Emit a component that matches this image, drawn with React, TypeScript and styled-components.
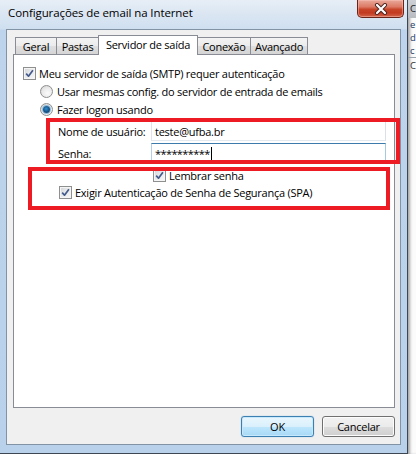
import React from 'react';
import styled, { createGlobalStyle, css } from 'styled-components';

const FONT = `"Open Sans", "Noto Sans", "DejaVu Sans", sans-serif`;

const Global = createGlobalStyle`
  *, *::before, *::after { box-sizing: border-box; }
  html, body { margin: 0; padding: 0; }
  body {
    width: 416px; height: 454px; overflow: hidden;
    font-family: ${FONT}; font-size: 11px; color: #000; background: #fff;
    letter-spacing: -0.25px;
  }
`;

const Desktop = styled.div`
  display: flex;
  width: 416px;
  height: 454px;
`;

const Window = styled.div`
  flex: none;
  width: 408px;
  height: 454px;
  display: flex;
  flex-direction: column;
  padding: 0 6px 8px 6px;
  border-right: 1px solid #3d4753;
  border-bottom: 1px solid #3d4753;
  background:
    linear-gradient(to bottom, #e7eef6 0px, #dbe6f2 14px, #cfdff0 29px, #bed4ec 30px, #b9d1eb 100%);
`;

const TitleBar = styled.div`
  height: 29px;
  flex: none;
  display: flex;
  justify-content: space-between;
  align-items: flex-start;
  margin: 0 -6px 0 -6px;
  padding: 0 3px 0 8px;
`;

const Title = styled.div`
  padding-top: 5px;
  line-height: 16px;
  font-size: 11.5px;
  letter-spacing: -0.1px;
  color: #000;
  white-space: nowrap;
`;

const CloseButton = styled.div`
  width: 47px;
  height: 18px;
  border: 1px solid #6b2418;
  border-top: none;
  border-radius: 0 0 5px 5px;
  background: linear-gradient(to bottom, #e9a99b 0%, #dc7a65 40%, #c7452a 55%, #c23b20 75%, #d2644a 100%);
  box-shadow: inset 0 0 0 1px rgba(255, 200, 190, 0.45);
  display: flex;
  align-items: center;
  justify-content: center;
`;

const Client = styled.div`
  flex: 1;
  display: flex;
  flex-direction: column;
  border: 1px solid #8393a6;
  background: #f0f0f0;
  padding: 5px 5px 0 6px;
`;

const TabRow = styled.div`
  position: relative;
  z-index: 1;
  height: 19px;
  display: flex;
  align-items: flex-start;
  padding-left: 2px;
`;

const Tab = styled.div<{ $w: number; $active?: boolean }>`
  width: ${(p) => p.$w}px;
  flex: none;
  height: 17px;
  margin-top: 2px;
  border: 1px solid #898c95;
  border-bottom: none;
  margin-right: -1px;
  display: flex;
  align-items: center;
  justify-content: center;
  padding-top: 1px;
  white-space: nowrap;
  background: linear-gradient(to bottom, #f3f3f3 0%, #ebebeb 50%, #dfdfdf 51%, #d5d5d5 100%);
  ${(p) =>
    p.$active &&
    css`
      height: 20px;
      margin-top: 0;
      padding-top: 0;
      padding-bottom: 3px;
      background: #fff;
      position: relative;
      z-index: 2;
    `}
`;

const Panel = styled.div`
  width: 382px;
  height: 354px;
  flex: none;
  border: 1px solid #898c95;
  background: #fff;
  padding: 9px 0 0 9px;
  display: flex;
  flex-direction: column;
  position: relative;
`;

const Row = styled.div<{ $indent?: number; $h?: number; $gap?: number; $top?: number }>`
  height: ${(p) => p.$h ?? 18}px;
  margin-left: ${(p) => p.$indent ?? 0}px;
  margin-top: ${(p) => p.$top ?? 0}px;
  display: flex;
  align-items: center;
  gap: ${(p) => p.$gap ?? 3}px;
  white-space: nowrap;
`;

const FieldRow = styled.div<{ $top?: number }>`
  height: 20px;
  margin-top: ${(p) => p.$top ?? 0}px;
  margin-left: 35px;
  display: flex;
  align-items: center;
`;

const FieldLabel = styled.span`
  width: 93px;
  flex: none;
`;

const TextBox = styled.div<{ $focus?: boolean }>`
  width: 235px;
  height: 20px;
  border: 1px solid;
  border-color: #abadb3 #dbdfe6 #e3e9ef #e2e3ea;
  background: #fff;
  padding: 0 3px;
  display: flex;
  align-items: center;
  ${(p) =>
    p.$focus &&
    css`
      border-color: #3d7bad #a4c9e3 #b7d9ed #b5cfe7;
    `}
`;

const Caret = styled.span`
  width: 1px;
  height: 13px;
  background: #000;
  margin-left: 1px;
`;

const Stars = styled.span`
  letter-spacing: -0.6px;
`;

const Check = styled.span`
  width: 13px;
  height: 13px;
  flex: none;
  border: 1px solid #8e8f8f;
  background: linear-gradient(135deg, #d0d3d7 0%, #e8e9ea 45%, #f7f7f7 100%);
  box-shadow: inset 0 0 0 1px #f5f5f5;
  display: flex;
  align-items: center;
  justify-content: center;
`;

const Radio = styled.span<{ $on?: boolean }>`
  width: 13px;
  height: 13px;
  flex: none;
  border-radius: 50%;
  border: 1px solid #8e8f8f;
  background: radial-gradient(circle at 60% 65%, #fbfbfb 0%, #e9e9e9 55%, #c9c9c9 100%);
  display: flex;
  align-items: center;
  justify-content: center;
  &::after {
    content: '';
    display: ${(p) => (p.$on ? 'block' : 'none')};
    width: 7px;
    height: 7px;
    border-radius: 50%;
    background: radial-gradient(circle at 45% 40%, #2f8fd0 0%, #195d92 45%, #0d2f55 100%);
    box-shadow: 0 0 0 1px #8ab9dd;
  }
`;

const ButtonRow = styled.div`
  display: flex;
  justify-content: flex-end;
  gap: 8px;
  padding-top: 8px;
  width: 382px;
`;

const Button = styled.div<{ $default?: boolean }>`
  width: 73px;
  height: 21px;
  border: 1px solid #707070;
  border-radius: 3px;
  background: linear-gradient(to bottom, #f2f2f2 0%, #ebebeb 50%, #dddddd 51%, #cfcfcf 100%);
  box-shadow: inset 0 0 0 1px #fcfcfc;
  display: flex;
  align-items: center;
  justify-content: center;
  font-size: 11px;
  ${(p) =>
    p.$default &&
    css`
      border-color: #3c7fb1;
      background: linear-gradient(to bottom, #eaf6fd 0%, #d9f0fc 50%, #bee6fd 51%, #a7d9f5 100%);
      box-shadow: inset 0 0 0 1px #c8e9fb, 0 0 1px #5aa7e0;
    `}
`;

const Highlight = styled.div<{ $x: number; $y: number; $w: number; $h: number }>`
  position: absolute;
  left: ${(p) => p.$x}px;
  top: ${(p) => p.$y}px;
  width: ${(p) => p.$w}px;
  height: ${(p) => p.$h}px;
  border: 4px solid #ed1c24;
  pointer-events: none;
  z-index: 5;
`;

const Backdrop = styled.div`
  flex: 1;
  display: flex;
  flex-direction: column;
  overflow: hidden;
  background: #fbfbfb;
  box-shadow: inset 3px 0 3px -1px rgba(0, 0, 0, 0.35);
  font-size: 9.5px;
  line-height: 13px;
  color: #1e3a66;
`;

const BackTop = styled.div`
  height: 18px;
  padding: 2px 0 0 2px;
  background: linear-gradient(to bottom, #cdd0d4, #b9bdc2);
  color: #222;
`;

const BackLines = styled.div`
  display: flex;
  flex-direction: column;
  padding-left: 2px;
  height: 39px;
`;

const BackLine = styled.div`
  height: 13px;
  overflow: hidden;
`;

const BackRule = styled.div`
  height: 1px;
  flex: none;
  background: #9aa3ad;
`;

const BackLast = styled.div`
  padding: 1px 0 0 2px;
  color: #333;
`;

const CheckMark = () => (
  <svg width="9" height="9" viewBox="0 0 9 9">
    <path d="M1.2 4.6 L3.5 7.2 L7.9 1.3" fill="none" stroke="#435a8c" strokeWidth="1.7" strokeLinejoin="round" />
  </svg>
);

const CloseGlyph = () => (
  <svg width="14" height="12" viewBox="0 0 14 12">
    <path d="M3 2 L11 10 M11 2 L3 10" stroke="#4a2420" strokeWidth="4" strokeLinecap="round" />
    <path d="M3 2 L11 10 M11 2 L3 10" stroke="#ffffff" strokeWidth="2.2" strokeLinecap="round" />
  </svg>
);

export default function App() {
  return (
    <>
      <Global />
      <Desktop>
        <Window>
          <TitleBar>
            <Title>Configurações de email na Internet</Title>
            <CloseButton>
              <CloseGlyph />
            </CloseButton>
          </TitleBar>
          <Client>
            <TabRow>
              <Tab $w={42}>Geral</Tab>
              <Tab $w={43}>Pastas</Tab>
              <Tab $w={100} $active>
                Servidor de saída
              </Tab>
              <Tab $w={54}>Conexão</Tab>
              <Tab $w={58}>Avançado</Tab>
            </TabRow>
            <Panel>
              <Row>
                <Check>
                  <CheckMark />
                </Check>
                <span>Meu servidor de saída (SMTP) requer autenticação</span>
              </Row>
              <Row $indent={17} $gap={4}>
                <Radio />
                <span>Usar mesmas config. do servidor de entrada de emails</span>
              </Row>
              <Row $indent={17} $gap={4}>
                <Radio $on />
                <span>Fazer logon usando</span>
              </Row>
              <FieldRow $top={3}>
                <FieldLabel>Nome de usuário:</FieldLabel>
                <TextBox>teste@ufba.br</TextBox>
              </FieldRow>
              <FieldRow $top={2}>
                <FieldLabel>Senha:</FieldLabel>
                <TextBox $focus>
                  <Stars>**********</Stars>
                  <Caret />
                </TextBox>
              </FieldRow>
              <Row $indent={130} $h={17} $top={4}>
                <Check>
                  <CheckMark />
                </Check>
                <span>Lembrar senha</span>
              </Row>
              <Row $indent={36} $h={17}>
                <Check>
                  <CheckMark />
                </Check>
                <span>Exigir Autenticação de Senha de Segurança (SPA)</span>
              </Row>
              <Highlight $x={32} $y={63} $w={354} $h={46} />
              <Highlight $x={14} $y={112} $w={362} $h={43} />
            </Panel>
            <ButtonRow>
              <Button $default>OK</Button>
              <Button>Cancelar</Button>
            </ButtonRow>
          </Client>
        </Window>
        <Backdrop>
          <BackTop>C</BackTop>
          <BackLines>
            <BackLine>e</BackLine>
            <BackLine>d</BackLine>
            <BackLine>c</BackLine>
          </BackLines>
          <BackRule />
          <BackLast>C</BackLast>
        </Backdrop>
      </Desktop>
    </>
  );
}
